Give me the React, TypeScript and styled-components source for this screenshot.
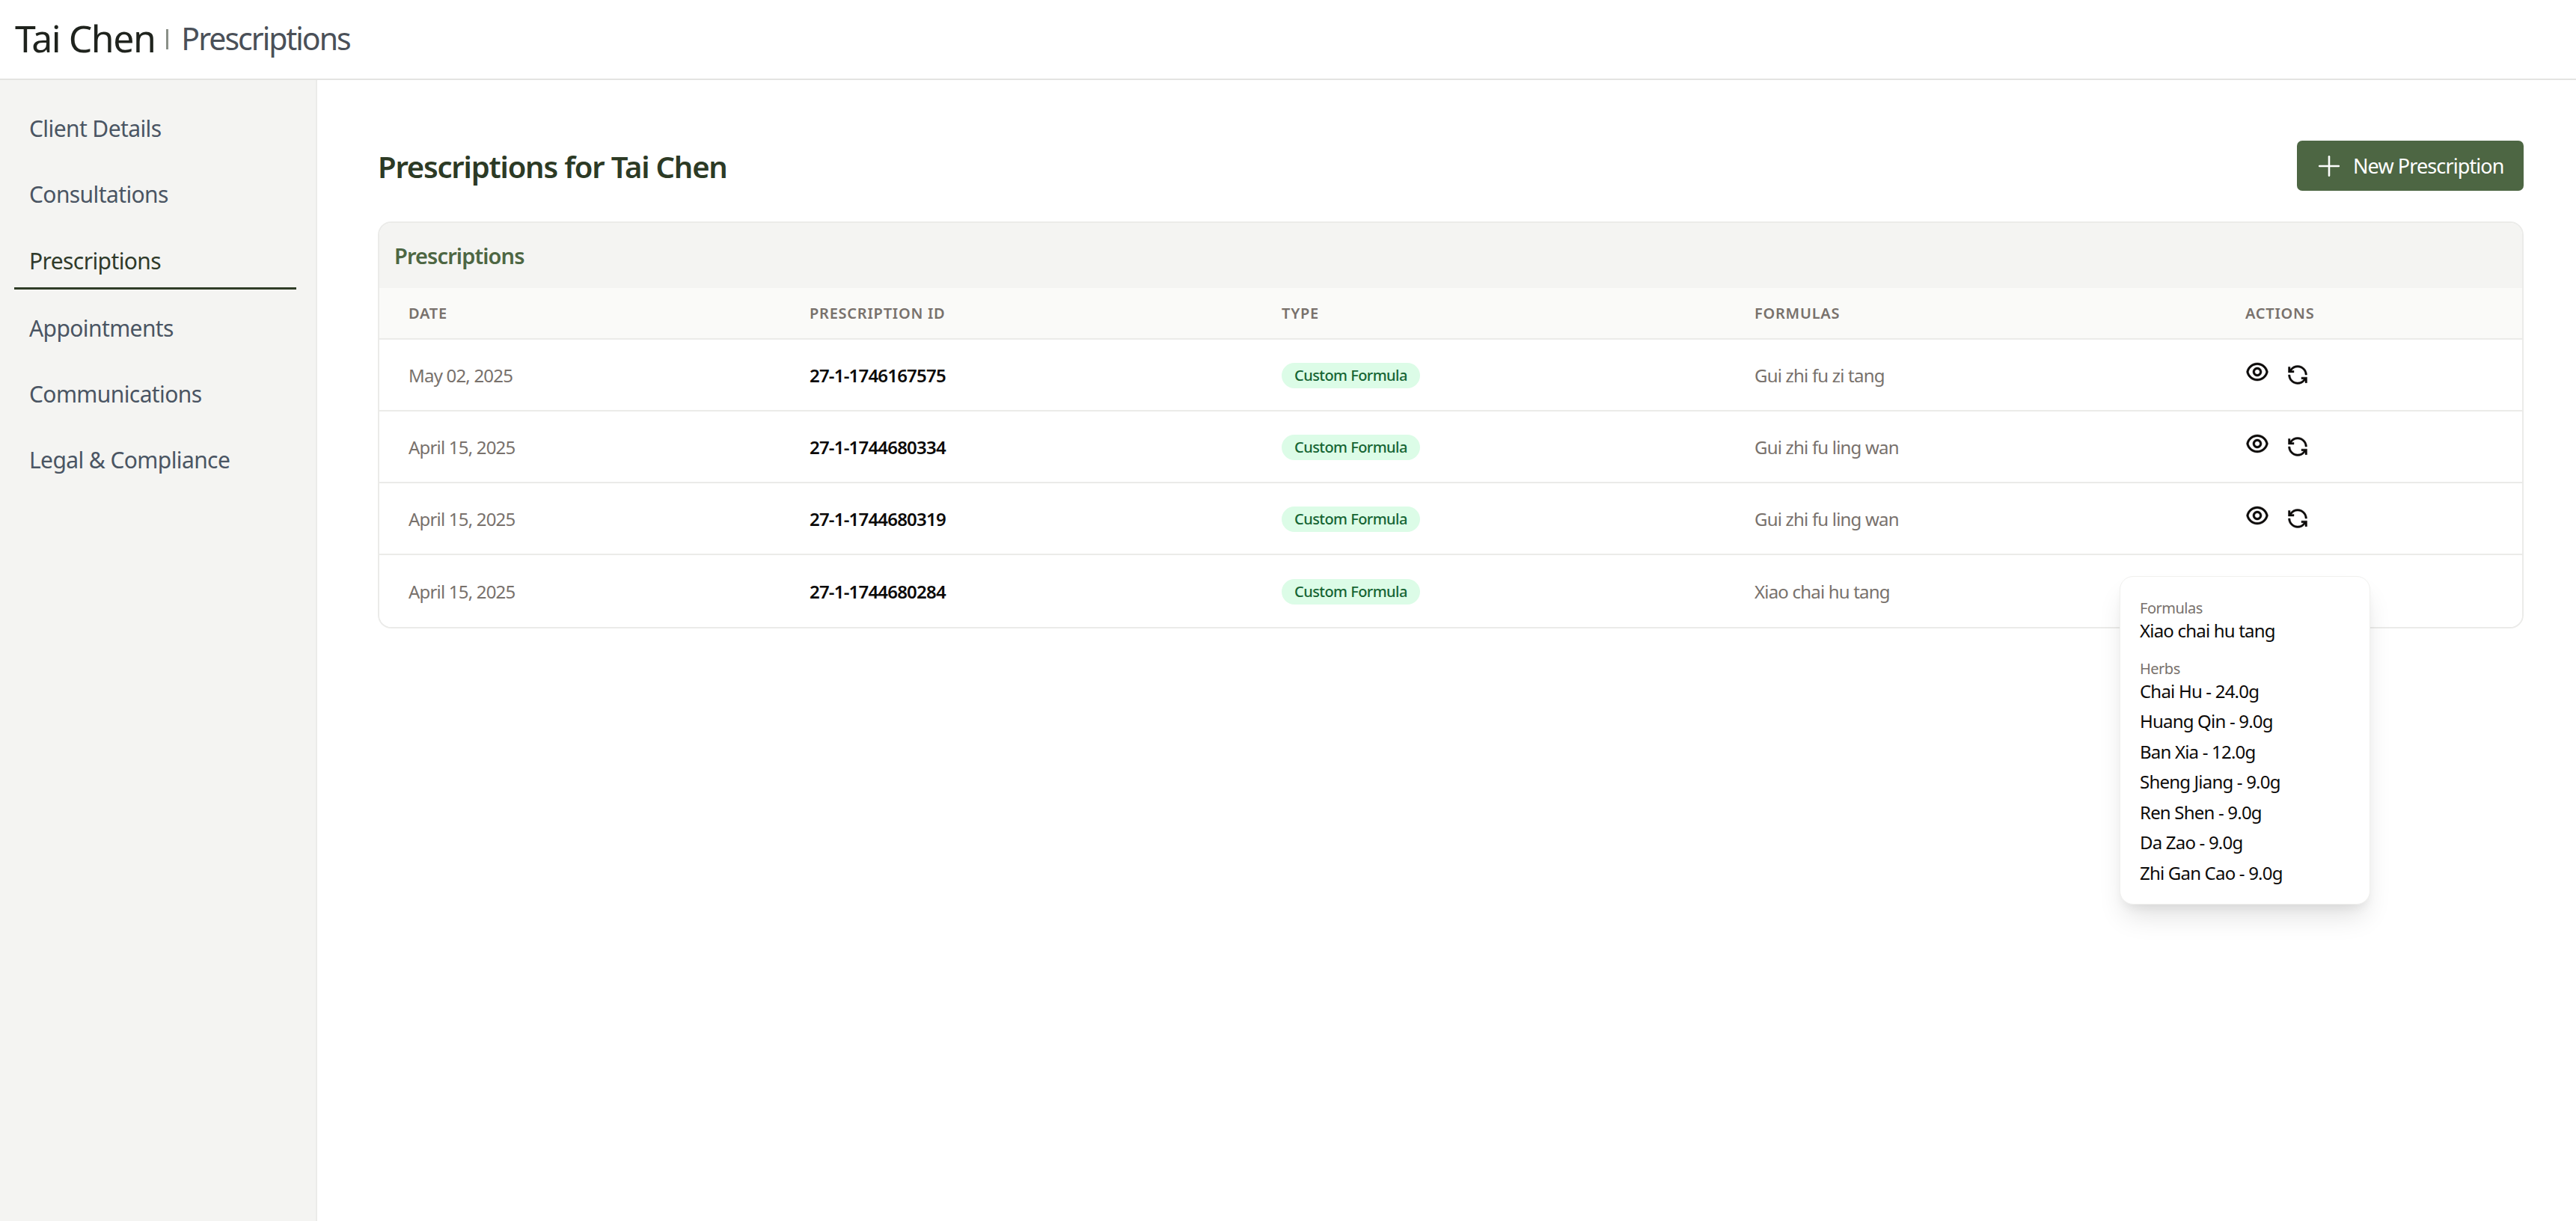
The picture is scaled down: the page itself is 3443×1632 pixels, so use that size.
import React from 'react';
import styled, { createGlobalStyle } from 'styled-components';
import { RiEyeLine, RiLoopLeftLine } from 'react-icons/ri';
import { Plus } from 'lucide-react';

const GlobalStyle = createGlobalStyle`
  html, body {
    margin: 0;
    padding: 0;
    background: #fff;
    font-family: "Noto Sans", "Open Sans", "Liberation Sans", sans-serif;
  }
`;

const Shell = styled.div`
  width: 3443px;
  height: 1632px;
  display: flex;
  flex-direction: column;
  overflow: hidden;
`;

const TopBar = styled.header`
  height: 107px;
  flex: none;
  display: flex;
  align-items: center;
  box-sizing: border-box;
  padding: 0 20px 4px;
  border-bottom: 2px solid #e3e3e1;
  background: #fff;
`;

const ClientName = styled.h1`
  margin: 0;
  font-size: 50px;
  font-weight: 400;
  color: #1f231d;
  letter-spacing: -1.5px;
`;

const TitleDivider = styled.span`
  width: 3px;
  height: 27px;
  margin: 4px 17px 0 15px;
  background: #8a9088;
`;

const PageName = styled.span`
  font-size: 41px;
  font-weight: 400;
  color: #4a5058;
  letter-spacing: -2px;
`;

const Body = styled.div`
  flex: 1;
  display: flex;
  min-height: 0;
`;

const Sidebar = styled.nav`
  width: 424px;
  flex: none;
  box-sizing: border-box;
  padding: 20px 26px 0 19px;
  background: #f4f4f2;
  border-right: 2px solid #ebebe9;
`;

const NavItem = styled.a<{ $active?: boolean }>`
  display: flex;
  align-items: center;
  height: ${(p) => (p.$active ? '84px' : '88px')};
  padding: ${(p) => (p.$active ? '9px 0 0 20px' : '0 0 0 20px')};
  margin-bottom: ${(p) => (p.$active ? '7px' : '0')};
  box-sizing: border-box;
  font-size: 30px;
  letter-spacing: -0.6px;
  color: ${(p) => (p.$active ? '#2f3a2a' : '#4a5563')};
  border-bottom: ${(p) => (p.$active ? '3px solid #2f3d27' : 'none')};
`;

const Main = styled.main`
  flex: 1;
  min-width: 0;
  padding: 81px 70px 0 81px;
  position: relative;
`;

const TitleRow = styled.div`
  display: flex;
  justify-content: space-between;
  align-items: center;
  height: 67px;
  margin-bottom: 41px;
`;

const PageHeading = styled.h2`
  margin: 2px 0 0;
  font-size: 40px;
  font-weight: 600;
  letter-spacing: -1.2px;
  color: #2c3a25;
`;

const NewButton = styled.button`
  width: 303px;
  height: 67px;
  display: flex;
  align-items: center;
  gap: 10px;
  padding: 0 0 0 21px;
  border: none;
  border-radius: 7px;
  background: #4d6643;
  color: #fff;
  font-family: inherit;
  font-size: 27px;
  letter-spacing: -0.9px;
`;

const Card = styled.section`
  border: 2px solid #ebebe9;
  border-radius: 18px;
  overflow: hidden;
`;

const CardTitle = styled.div`
  height: 87px;
  display: flex;
  align-items: center;
  padding-left: 20px;
  background: #f4f4f2;
  font-size: 29px;
  font-weight: 600;
  letter-spacing: -0.9px;
  color: #4d6643;
`;

const Row = styled.div<{ $head?: boolean }>`
  display: grid;
  grid-template-columns: 536px 631px 632px 656px 1fr;
  align-items: center;
  height: ${(p) => (p.$head ? '69px' : '96px')};
  box-sizing: border-box;
  background: ${(p) => (p.$head ? '#fafaf8' : '#fff')};
  border-bottom: 2px solid #ebebe9;
  &:last-child {
    border-bottom: none;
  }
`;

const HeadCell = styled.div`
  padding-left: 39px;
  font-size: 20px;
  font-weight: 600;
  letter-spacing: 0.75px;
  text-transform: uppercase;
  color: #78716c;
`;

const Cell = styled.div<{ $strong?: boolean }>`
  padding-left: 39px;
  font-size: 24px;
  letter-spacing: -0.8px;
  font-weight: ${(p) => (p.$strong ? 600 : 400)};
  color: ${(p) => (p.$strong ? '#0c0a09' : '#78716c')};
`;

const Badge = styled.span`
  display: inline-flex;
  align-items: center;
  height: 34px;
  padding: 0 17px;
  border-radius: 17px;
  background: #dcfce7;
  color: #166534;
  font-size: 20px;
  font-weight: 500;
  letter-spacing: -0.55px;
`;

const Actions = styled.div`
  display: flex;
  align-items: center;
  gap: 23px;
  padding-left: 39px;
  color: #0c0a09;
`;

const ViewIcon = styled(RiEyeLine)`
  margin-bottom: 8px;
  stroke-width: 0.35;
`;

const SwapIcon = styled(RiLoopLeftLine)`
  stroke-width: 0.35;
`;

const Popover = styled.div`
  position: absolute;
  left: 2409px;
  top: 663px;
  width: 335px;
  height: 439px;
  box-sizing: border-box;
  padding: 32px 26px;
  background: #fff;
  border: 1px solid #f0f0ee;
  border-radius: 18px;
  box-shadow: 0 22px 36px -7px rgba(0, 0, 0, 0.12), 0 9px 13px -4px rgba(0, 0, 0, 0.06);
`;

const PopLabel = styled.div`
  font-size: 20px;
  line-height: 19.5px;
  letter-spacing: -0.5px;
  color: #78716c;
`;

const PopValue = styled.div`
  font-size: 24px;
  line-height: 40.5px;
  letter-spacing: -0.8px;
  color: #0c0a09;
`;

const PopSection = styled.div`
  margin-bottom: 21px;
`;

const navItems = ['Client Details', 'Consultations', 'Prescriptions', 'Appointments', 'Communications', 'Legal & Compliance'];

const rows = [
  { date: 'May 02, 2025', id: '27-1-1746167575', formula: 'Gui zhi fu zi tang', icons: true },
  { date: 'April 15, 2025', id: '27-1-1744680334', formula: 'Gui zhi fu ling wan', icons: true },
  { date: 'April 15, 2025', id: '27-1-1744680319', formula: 'Gui zhi fu ling wan', icons: true },
  { date: 'April 15, 2025', id: '27-1-1744680284', formula: 'Xiao chai hu tang', icons: false },
];

const herbs = ['Chai Hu - 24.0g', 'Huang Qin - 9.0g', 'Ban Xia - 12.0g', 'Sheng Jiang - 9.0g', 'Ren Shen - 9.0g', 'Da Zao - 9.0g', 'Zhi Gan Cao - 9.0g'];

const App: React.FC = () => (
  <Shell>
    <GlobalStyle />
    <TopBar>
      <ClientName>Tai Chen</ClientName>
      <TitleDivider />
      <PageName>Prescriptions</PageName>
    </TopBar>
    <Body>
      <Sidebar>
        {navItems.map((item) => (
          <NavItem key={item} $active={item === 'Prescriptions'}>
            {item}
          </NavItem>
        ))}
      </Sidebar>
      <Main>
        <TitleRow>
          <PageHeading>Prescriptions for Tai Chen</PageHeading>
          <NewButton>
            <Plus size={44} strokeWidth={1.4} />
            New Prescription
          </NewButton>
        </TitleRow>
        <Card>
          <CardTitle>Prescriptions</CardTitle>
          <Row $head>
            <HeadCell>Date</HeadCell>
            <HeadCell>Prescription ID</HeadCell>
            <HeadCell>Type</HeadCell>
            <HeadCell>Formulas</HeadCell>
            <HeadCell>Actions</HeadCell>
          </Row>
          {rows.map((row) => (
            <Row key={row.id}>
              <Cell>{row.date}</Cell>
              <Cell $strong>{row.id}</Cell>
              <Cell>
                <Badge>Custom Formula</Badge>
              </Cell>
              <Cell>{row.formula}</Cell>
              {row.icons ? (
                <Actions>
                  <ViewIcon size={32} />
                  <SwapIcon size={30} />
                </Actions>
              ) : (
                <div />
              )}
            </Row>
          ))}
        </Card>
        <Popover>
          <PopSection>
            <PopLabel>Formulas</PopLabel>
            <PopValue>Xiao chai hu tang</PopValue>
          </PopSection>
          <PopLabel>Herbs</PopLabel>
          {herbs.map((herb) => (
            <PopValue key={herb}>{herb}</PopValue>
          ))}
        </Popover>
      </Main>
    </Body>
  </Shell>
);

export default App;
